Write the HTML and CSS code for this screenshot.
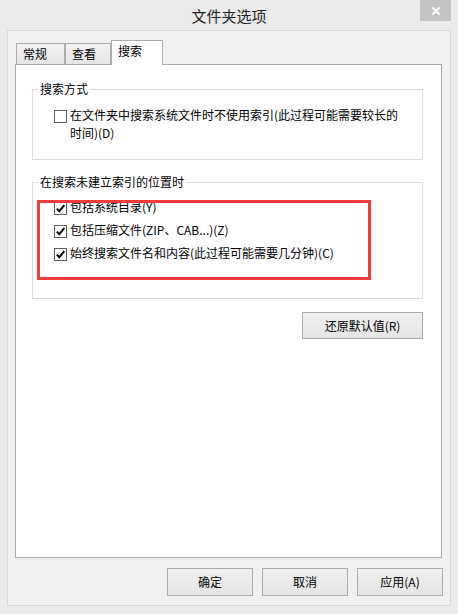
FILE: index.html
```html
<!DOCTYPE html>
<html lang="zh-CN">
<head>
<meta charset="utf-8">
<title>文件夹选项</title>
<link rel="stylesheet" href="styles.css">
</head>
<body>
<div class="window">
  <div class="titlebar">
    <div></div>
    <div class="title">文件夹选项</div>
    <div class="close"><svg width="10" height="10" viewBox="0 0 10 10"><path d="M1.5 1.5 L8.5 8.5 M8.5 1.5 L1.5 8.5" stroke="#fff" stroke-width="2" fill="none"/></svg></div>
  </div>
  <div class="client">
    <div class="tabs">
      <div class="tab t1">常规</div>
      <div class="tab t2">查看</div>
      <div class="tab active">搜索</div>
    </div>
    <div class="panel">
      <fieldset class="group g1">
        <legend>搜索方式</legend>
        <div class="opt">
          <span class="cb"></span>
          <span class="lbl">在文件夹中搜索系统文件时不使用索引(此过程可能需要较长的时间)(D)</span>
        </div>
      </fieldset>
      <fieldset class="group g2">
        <legend>在搜索未建立索引的位置时</legend>
        <div class="opts">
          <div class="opt"><span class="cb checked"><svg width="11" height="11" viewBox="0 0 11 11"><path d="M1.8 5.6 L4.3 8.2 L9.3 2.2" stroke="#000" stroke-width="2" fill="none"/></svg></span><span class="lbl">包括系统目录(Y)</span></div>
          <div class="opt"><span class="cb checked"><svg width="11" height="11" viewBox="0 0 11 11"><path d="M1.8 5.6 L4.3 8.2 L9.3 2.2" stroke="#000" stroke-width="2" fill="none"/></svg></span><span class="lbl">包括压缩文件(ZIP、CAB...)(Z)</span></div>
          <div class="opt"><span class="cb checked"><svg width="11" height="11" viewBox="0 0 11 11"><path d="M1.8 5.6 L4.3 8.2 L9.3 2.2" stroke="#000" stroke-width="2" fill="none"/></svg></span><span class="lbl">始终搜索文件名和内容(此过程可能需要几分钟)(C)</span></div>
          <div class="mark"></div>
        </div>
      </fieldset>
      <div class="restore-row"><button class="btn restore">还原默认值(R)</button></div>
    </div>
    <div class="actions">
      <button class="btn act">确定</button>
      <button class="btn act">取消</button>
      <button class="btn act">应用(A)</button>
    </div>
  </div>
</div>
</body>
</html>
```

FILE: styles.css
```css
* { box-sizing: border-box; }
html, body { margin: 0; padding: 0; }
body {
  background: #ebebeb;
  font-family: "Noto Sans CJK SC", "Noto Sans", sans-serif;
  font-size: 12px;
  color: #000;
}
.window {
  width: 458px;
  height: 614px;
  background: #ebebeb;
  display: flex;
  flex-direction: column;
}
.titlebar {
  height: 30px;
  display: grid;
  grid-template-columns: 1fr auto 1fr;
}
.title {
  font-size: 15px;
  line-height: 30px;
  color: #222;
  padding-top: 1px;
}
.close {
  justify-self: end;
  align-self: start;
  width: 31px;
  height: 21px;
  margin-right: 7px;
  background: #c4c4c4;
  display: flex;
  align-items: center;
  justify-content: center;
}
.close svg { display: block; }
.client {
  margin: 0 7px 8px 7px;
  height: 576px;
  border: 1px solid #d9d9d9;
  background: #f0f0f0;
  padding: 9px 7px 9px 7px;
  display: flex;
  flex-direction: column;
}
.tabs {
  display: flex;
  align-items: flex-end;
  height: 24px;
  margin-left: 1px;
  position: relative;
  z-index: 1;
}
.tab {
  border: 1px solid #acacac;
  border-bottom: none;
  background: linear-gradient(#f2f2f2, #e6e6e6);
  height: 21px;
  line-height: 16px;
  padding: 2px 0 0 6px;
  color: #000;
}
.t1 { width: 49px; }
.t2 { width: 46px; }
.tab.active {
  width: 52px;
  height: 25px;
  margin-bottom: -1px;
  background: #fff;
  padding: 2px 0 0 6px;
}
.panel {
  flex: 1;
  margin-right: 1px;
  background: #fff;
  border: 1px solid #acacac;
  padding: 0 18px 0 16px;
  display: flex;
  flex-direction: column;
}
.group {
  margin: 0;
  padding: 0;
  border: 1px solid #dcdcdc;
  min-width: 0;
}
.group legend {
  margin-left: 5px;
  padding: 0 2px;
  line-height: 14px;
  font-size: 12px;
  color: #000;
}
.g1 {
  margin-top: 17px;
  padding: 10px 16px 17px 0;
}
.g2 {
  margin-top: 15px;
  padding: 9px 16px 36px 0;
}
.opts {
  position: relative;
  display: flex;
  flex-direction: column;
  gap: 5px;
}
.opt {
  display: flex;
  align-items: flex-start;
  padding-left: 21px;
  line-height: 18px;
}
.cb {
  flex: none;
  width: 13px;
  height: 13px;
  margin-top: 4px;
  margin-right: 3px;
  border: 1px solid #5f5f5f;
  background: #fff;
  display: flex;
  align-items: center;
  justify-content: center;
}
.cb svg { display: block; }
.mark {
  position: absolute;
  left: 4px;
  top: 2px;
  width: 334px;
  height: 80px;
  border: 3px solid #f23b3b;
  pointer-events: none;
}
.restore-row {
  display: flex;
  justify-content: flex-end;
  margin-top: 13px;
}
.btn {
  font-family: "Noto Sans CJK SC", "Noto Sans", sans-serif;
  font-size: 12px;
  color: #000;
  border: 1px solid #acacac;
  background: linear-gradient(#f0f0f0, #e5e5e5);
  padding: 0;
  margin: 0;
  line-height: 16px;
}
.restore {
  width: 121px;
  height: 27px;
}
.actions {
  display: flex;
  justify-content: flex-end;
  gap: 9px;
  margin-top: 10px;
}
.act {
  width: 86px;
  height: 28px;
}
```
